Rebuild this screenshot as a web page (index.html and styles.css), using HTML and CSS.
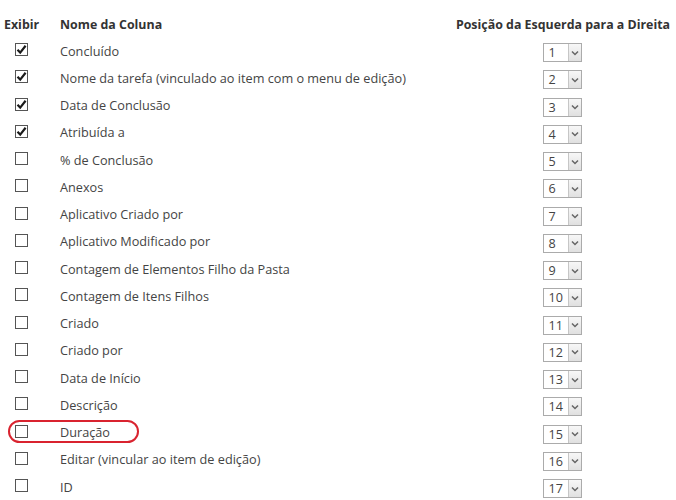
FILE: index.html
```html
<!DOCTYPE html>
<html lang="pt">
<head>
<meta charset="utf-8">
<link rel="stylesheet" href="styles.css">
</head>
<body>
<div class="grid">
  <div class="hd c1">Exibir</div>
  <div class="hd c2">Nome da Coluna</div>
  <div class="hd c3">Posição da Esquerda para a Direita</div>
</div>
<div class="rows" id="rows"></div>
<script>
var items=[["Concluído",1],["Nome da tarefa (vinculado ao item com o menu de edição)",1],["Data de Conclusão",1],["Atribuída a",1],["% de Conclusão",0],["Anexos",0],["Aplicativo Criado por",0],["Aplicativo Modificado por",0],["Contagem de Elementos Filho da Pasta",0],["Contagem de Itens Filhos",0],["Criado",0],["Criado por",0],["Data de Início",0],["Descrição",0],["Duração",0],["Editar (vincular ao item de edição)",0],["ID",0]];
var h="";
items.forEach(function(it,i){
  h+='<div class="row'+(i==14?' hl':'')+'">'+
  '<div class="c1"><span class="cb">'+(it[1]?'<svg width="11" height="11" viewBox="0 0 11 11"><path d="M1.5 5.8 L4.2 8.6 L9.6 1.8" fill="none" stroke="#1a1a1a" stroke-width="2.2"/></svg>':'')+'</span></div>'+
  '<div class="c2">'+it[0]+'</div>'+
  '<div class="c3"><span class="sel"><span class="num">'+(i+1)+'</span><span class="arr"><svg width="8" height="6" viewBox="0 0 8 6"><path d="M1 1.5 L4 4.5 L7 1.5" fill="none" stroke="#666" stroke-width="1.5"/></svg></span></span></div>'+
  (i==14?'<span class="ring"></span>':'')+
  '</div>';
});
document.getElementById('rows').innerHTML=h;
</script>
</body>
</html>
```
FILE: styles.css
```css
html,body{margin:0;padding:0;background:#fff;}
body{font-family:"Open Sans","Noto Sans",sans-serif;font-size:12.7px;color:#444;}
.grid,.row{display:grid;grid-template-columns:60px 396px 214px;}
.grid{height:24px;padding-top:12px;align-items:center;}
.hd{font-weight:bold;color:#333;font-size:12.4px;white-space:nowrap;}
.hd.c1{padding-left:4px;}
.hd.c3{text-align:center;font-size:12.4px;letter-spacing:0;}
.rows{display:flex;flex-direction:column;padding-top:1px;}
.row{height:27.25px;align-items:center;position:relative;}
.c1{display:flex;}
.cb{width:11px;height:11px;border:1px solid #555;margin-left:15px;display:flex;align-items:center;justify-content:center;background:#fff;}
.row .c1 .cb{margin-top:-2px;}
.c2{white-space:nowrap;}
.c3{display:flex;justify-content:center;}
.sel{display:flex;width:37px;height:17px;border:1px solid #ababab;margin-left:-2px;margin-top:4px;}
.num{flex:1;padding-left:5px;line-height:17px;color:#444;font-size:12.6px;}
.arr{width:12px;border-left:1px solid #c6c6c6;background:linear-gradient(#f7f7f7,#e0e0e0);display:flex;align-items:center;justify-content:center;}
.ring{position:absolute;left:8px;top:1.5px;width:127px;height:19px;border:2px solid #d9232f;border-radius:12px;}
```
